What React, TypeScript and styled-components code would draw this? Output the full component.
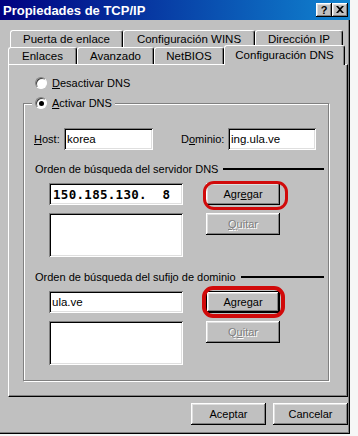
import React from "react";
import styled, { createGlobalStyle, css } from "styled-components";

const GlobalStyle = createGlobalStyle`
  html, body {
    margin: 0;
    padding: 0;
    background: #f6f6f6;
  }
  body {
    font-family: "Liberation Sans", Arial, sans-serif;
    font-size: 11px;
    color: #000;
  }
`;

const raised = css`
  box-shadow: inset -1px -1px #000, inset 1px 1px #fff, inset -2px -2px #808080,
    inset 2px 2px #dfdfdf;
`;

const sunken = css`
  box-shadow: inset 1px 1px #808080, inset -1px -1px #fff, inset 2px 2px #000,
    inset -2px -2px #dfdfdf;
`;

const Window = styled.div`
  width: 350px;
  height: 434px;
  background: #c0c0c0;
  display: flex;
  flex-direction: column;
  box-shadow: inset -1px -1px #000, inset -2px -2px #808080;
`;

const TitleBar = styled.div`
  height: 20px;
  display: flex;
  align-items: center;
  justify-content: space-between;
  padding: 0 2px 0 3px;
  background: linear-gradient(90deg, #000080 0%, #1084d0 100%);
  color: #fff;
  font-weight: bold;
  font-size: 13px;
`;

const CaptionButtons = styled.div`
  display: flex;
`;

const CaptionButton = styled.div`
  width: 16px;
  height: 14px;
  box-sizing: border-box;
  background: #c0c0c0;
  ${raised};
  display: flex;
  align-items: center;
  justify-content: center;
  color: #000;
  font-size: 11px;
  font-weight: bold;
  padding-bottom: 1px;
`;

const Tabs = styled.div`
  margin-top: 10px;
  display: flex;
  flex-direction: column;
`;

const TabRow = styled.div<{ $indent: number; $height: number }>`
  display: flex;
  align-items: flex-end;
  height: ${(p) => p.$height}px;
  margin-left: ${(p) => p.$indent}px;
`;

const Tab = styled.div<{ $w: number; $active?: boolean }>`
  width: ${(p) => p.$w}px;
  height: 100%;
  box-sizing: border-box;
  display: flex;
  align-items: center;
  justify-content: center;
  background: #c0c0c0;
  border-top: 1px solid #fff;
  border-left: 1px solid #fff;
  border-right: 1px solid #000;
  border-radius: 3px 3px 0 0;
  box-shadow: inset -1px 0 #808080;
  white-space: nowrap;
  font-size: 11.5px;
  ${(p) =>
    p.$active &&
    css`
      height: 20px;
      margin-bottom: -1px;
      padding-bottom: 2px;
      position: relative;
      z-index: 1;
    `}
`;

const Panel = styled.div`
  margin-left: 8px;
  width: 340px;
  height: 333px;
  box-sizing: border-box;
  border-top: 1px solid #fff;
  border-left: 1px solid #fff;
  border-right: 1px solid #000;
  border-bottom: 1px solid #000;
  box-shadow: inset -1px -1px #808080;
  padding: 11px 0 0 14px;
  display: flex;
  flex-direction: column;
`;

const RadioRow = styled.label`
  height: 14px;
  display: flex;
  align-items: center;
  gap: 5px;
  margin-left: 12px;
`;

const Radio = styled.span<{ $checked?: boolean }>`
  width: 12px;
  height: 12px;
  border-radius: 50%;
  box-sizing: border-box;
  background: #fff;
  border: 1px solid;
  border-color: #808080 #fff #fff #808080;
  box-shadow: inset 1px 1px #404040;
  display: flex;
  align-items: center;
  justify-content: center;

  &::after {
    content: "";
    width: 5px;
    height: 5px;
    border-radius: 50%;
    background: ${(p) => (p.$checked ? "#000" : "transparent")};
  }
`;

const Key = styled.span`
  text-decoration: underline;
`;

const GroupBox = styled.div`
  margin-top: 13px;
  width: 306px;
  height: 278px;
  box-sizing: border-box;
  border: 1px solid #808080;
  box-shadow: 1px 1px 0 #fff, inset 1px 1px 0 #fff;
  display: flex;
  flex-direction: column;
`;

const Legend = styled.div`
  align-self: flex-start;
  margin: -8px 0 0 8px;
  padding: 0 3px;
  background: #c0c0c0;

  ${RadioRow} {
    margin-left: 0;
  }
`;

const FieldRow = styled.div`
  margin-top: 18px;
  height: 22px;
  padding-left: 10px;
  display: flex;
  align-items: center;
`;

const FieldLabel = styled.span<{ $w: number; $gap?: number }>`
  width: ${(p) => p.$w}px;
  margin-left: ${(p) => p.$gap || 0}px;
  white-space: nowrap;
`;

const TextBox = styled.div<{ $w?: number }>`
  width: ${(p) => (p.$w ? `${p.$w}px` : "100%")};
  height: 22px;
  box-sizing: border-box;
  background: #fff;
  ${sunken};
  display: flex;
  align-items: center;
  padding-left: 3px;
  font-size: 11.5px;
`;

const IpBox = styled(TextBox)`
  padding-left: 4px;
  font-family: "DejaVu Sans Mono", "Liberation Mono", monospace;
  font-weight: bold;
  font-size: 12.5px;
  letter-spacing: 0.3px;
  white-space: pre;
`;

const ListBox = styled.div<{ $h: number }>`
  height: ${(p) => p.$h}px;
  box-sizing: border-box;
  background: #fff;
  ${sunken};
`;

const SectionHead = styled.div<{ $top: number }>`
  margin-top: ${(p) => p.$top}px;
  height: 14px;
  padding: 0 4px 0 11px;
  display: flex;
  align-items: center;
  white-space: nowrap;
`;

const Rule = styled.div`
  flex: 1;
  height: 2px;
  margin-left: 5px;
  background: #000;
`;

const SectionBody = styled.div`
  margin-top: 7px;
  padding-left: 25px;
  display: flex;
  gap: 23px;
`;

const ListColumn = styled.div`
  width: 134px;
  display: flex;
  flex-direction: column;
  gap: 8px;
`;

const ButtonColumn = styled.div`
  width: 74px;
  display: flex;
  flex-direction: column;
  gap: 8px;
`;

const Button = styled.div<{ $w?: number; $disabled?: boolean; $default?: boolean }>`
  position: relative;
  width: ${(p) => p.$w || 74}px;
  height: 22px;
  box-sizing: border-box;
  background: #c0c0c0;
  ${raised};
  display: flex;
  align-items: center;
  justify-content: center;
  ${(p) =>
    p.$default &&
    css`
      border: 1px solid #000;
    `}
  ${(p) =>
    p.$disabled &&
    css`
      color: #808080;
      text-shadow: 1px 1px 0 #fff;
    `}
`;

const Ring = styled.span<{ $t: number; $r: number; $b: number; $l: number; $bw: number }>`
  position: absolute;
  top: ${(p) => p.$t}px;
  right: ${(p) => p.$r}px;
  bottom: ${(p) => p.$b}px;
  left: ${(p) => p.$l}px;
  border: ${(p) => p.$bw}px solid #d10a0a;
  border-radius: 11px;
  pointer-events: none;
`;

const Footer = styled.div`
  margin-top: 6px;
  padding-right: 2px;
  display: flex;
  justify-content: flex-end;
  gap: 7px;
`;

const CloseGlyph = () => (
  <svg width="8" height="7" viewBox="0 0 8 7">
    <path d="M0 0h2l2 2 2-2h2L5 3.5 8 7H6L4 5 2 7H0l3-3.5z" fill="#000" />
  </svg>
);

const App: React.FC = () => {
  return (
    <>
      <GlobalStyle />
      <Window>
        <TitleBar>
          <span>Propiedades de TCP/IP</span>
          <CaptionButtons>
            <CaptionButton>?</CaptionButton>
            <CaptionButton>
              <CloseGlyph />
            </CaptionButton>
          </CaptionButtons>
        </TitleBar>

        <Tabs>
          <TabRow $indent={10} $height={17}>
            <Tab $w={113}>Puerta de enlace</Tab>
            <Tab $w={132}>Configuración WINS</Tab>
            <Tab $w={88}>Dirección IP</Tab>
          </TabRow>
          <TabRow $indent={8} $height={17}>
            <Tab $w={69}>Enlaces</Tab>
            <Tab $w={77}>Avanzado</Tab>
            <Tab $w={70}>NetBIOS</Tab>
            <Tab $w={121} $active>
              Configuración DNS
            </Tab>
          </TabRow>
        </Tabs>

        <Panel>
          <RadioRow>
            <Radio />
            <span>
              <Key>D</Key>esactivar DNS
            </span>
          </RadioRow>

          <GroupBox>
            <Legend>
              <RadioRow>
                <Radio $checked />
                <span>
                  <Key>A</Key>ctivar DNS
                </span>
              </RadioRow>
            </Legend>

            <FieldRow>
              <FieldLabel $w={30}>
                <Key>H</Key>ost:
              </FieldLabel>
              <TextBox $w={89}>korea</TextBox>
              <FieldLabel $w={47} $gap={28}>
                D<Key>o</Key>minio:
              </FieldLabel>
              <TextBox $w={88}>ing.ula.ve</TextBox>
            </FieldRow>

            <SectionHead $top={12}>
              Orden de búsqueda del servidor DNS
              <Rule />
            </SectionHead>
            <SectionBody>
              <ListColumn>
                <IpBox>150.185.130.  8</IpBox>
                <ListBox $h={44} />
              </ListColumn>
              <ButtonColumn>
                <Button>
                  <span>
                    Agr<Key>e</Key>gar
                  </span>
                  <Ring $t={-2} $r={-8} $b={-5} $l={-3} $bw={3} />
                </Button>
                <Button $disabled>
                  <span>
                    <Key>Q</Key>uitar
                  </span>
                </Button>
              </ButtonColumn>
            </SectionBody>

            <SectionHead $top={13}>
              Orden de búsqueda del sufijo de dominio
              <Rule />
            </SectionHead>
            <SectionBody>
              <ListColumn>
                <TextBox>ula.ve</TextBox>
                <ListBox $h={44} />
              </ListColumn>
              <ButtonColumn>
                <Button $default>
                  <span>
                    A<Key>g</Key>regar
                  </span>
                  <Ring $t={-6} $r={-6} $b={-6} $l={-5} $bw={4} />
                </Button>
                <Button $disabled>
                  <span>
                    Q<Key>u</Key>itar
                  </span>
                </Button>
              </ButtonColumn>
            </SectionBody>
          </GroupBox>
        </Panel>

        <Footer>
          <Button $w={75}>Aceptar</Button>
          <Button $w={75}>Cancelar</Button>
        </Footer>
      </Window>
    </>
  );
};

export default App;
